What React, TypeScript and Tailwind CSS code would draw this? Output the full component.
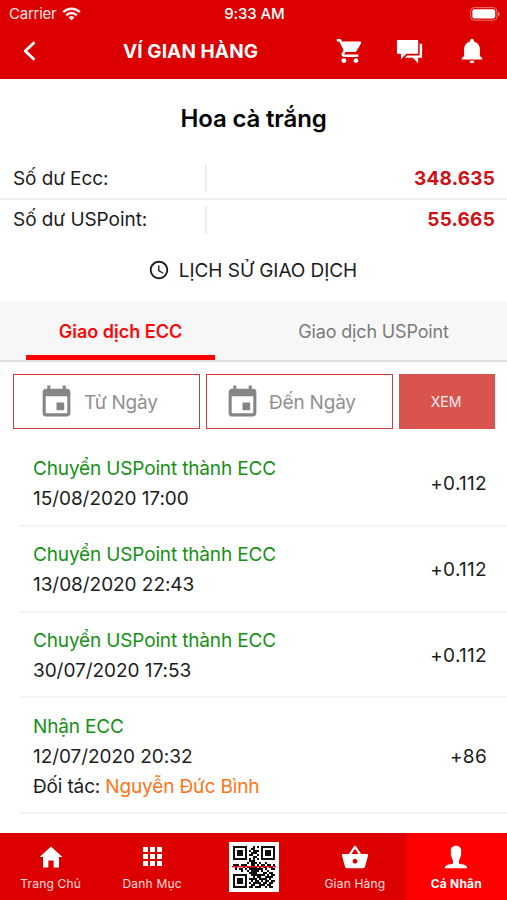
import type { ReactNode } from "react";
import {
  IoIosPerson,
  IoMdBasket,
  IoMdCart,
  IoMdChatboxes,
  IoMdHome,
  IoMdNotifications,
} from "react-icons/io";
import { MdAccessTime, MdEvent } from "react-icons/md";

const transactions = [
  { title: "Chuyển USPoint thành ECC", time: "15/08/2020 17:00", amount: "+0.112" },
  { title: "Chuyển USPoint thành ECC", time: "13/08/2020 22:43", amount: "+0.112" },
  { title: "Chuyển USPoint thành ECC", time: "30/07/2020 17:53", amount: "+0.112" },
  { title: "Nhận ECC", time: "12/07/2020 20:32", amount: "+86", partner: "Nguyễn Đức Bình" },
];

const qrRows = [
  "111111100010101111111",
  "100000100110001000001",
  "101110101011101011101",
  "101110100111001011101",
  "101110101100101011101",
  "100000100011001000001",
  "111111101010101111111",
  "000000001110000000000",
  "000000010111010010000",
  "111011100110101101101",
  "010001011111010110110",
  "010110101111111010011",
  "000010010111101001000",
  "000000001111000110110",
  "111111100111111101011",
  "100000100010110011110",
  "101110101111011110100",
  "101110100101101011011",
  "101110101011110110110",
  "100000100110011101100",
  "111111101101110010110",
];

function QrCode() {
  return (
    <svg width="50" height="50" viewBox="0 0 50 50">
      <rect width="50" height="50" fill="#fff" />
      {qrRows.map((row, y) =>
        row.split("").map((cell, x) =>
          cell === "1" ? (
            <rect key={`${x}-${y}`} x={4 + x * 2} y={4 + y * 2} width="2" height="2" fill="#111" />
          ) : null
        )
      )}
      <rect x="3" y="24" width="44" height="1.4" fill="#f01020" />
    </svg>
  );
}

function GridIcon() {
  return (
    <svg width="19" height="19" viewBox="0 0 19 19" fill="currentColor">
      {[0, 7, 14].map((y) =>
        [0, 7, 14].map((x) => <rect key={`${x}-${y}`} x={x} y={y} width="5" height="5" />)
      )}
    </svg>
  );
}

function StatusBar() {
  return (
    <div className="grid h-[27px] grid-cols-3 items-center pl-[9px] pr-[7px] pt-px text-[15px]">
      <div className="flex items-center gap-[6px] opacity-90">
        <span className="tracking-[-0.25px]">Carrier</span>
        <svg width="19" height="14" viewBox="0 0 19 14" fill="none" stroke="#fff" strokeWidth="2.5">
          <path d="M1.2 5.1a11.7 11.7 0 0 1 16.6 0" />
          <path d="M4.2 8.3a7.5 7.5 0 0 1 10.6 0" />
          <path d="M9.5 13.6 6.5 10.5a4.3 4.3 0 0 1 6 0z" fill="#fff" stroke="none" />
        </svg>
      </div>
      <span className="text-center text-[15px] font-medium tracking-[-0.1px]">9:33 AM</span>
      <svg className="justify-self-end" width="30" height="14" viewBox="0 0 30 14" fill="none">
        <rect x="0.6" y="0.6" width="26.4" height="12.6" rx="3.6" stroke="#fff" strokeOpacity="0.45" />
        <rect x="2.4" y="2.3" width="22.8" height="9.2" rx="2" fill="#fff" />
        <path d="M28.2 4.8v4.4c1.9-.8 1.9-3.6 0-4.4z" fill="#fff" fillOpacity="0.6" />
      </svg>
    </div>
  );
}

function NavItem({ icon, label, active }: { icon: ReactNode; label: string; active?: boolean }) {
  return (
    <div
      className={
        active
          ? "flex flex-1 flex-col items-center rounded-t-md bg-[#ff0000] font-bold text-white"
          : "flex flex-1 flex-col items-center text-white/85"
      }
    >
      <div className="flex h-[47px] items-center text-white">{icon}</div>
      <span className="text-[12px] leading-[8px] tracking-[0.2px]">{label}</span>
    </div>
  );
}

export default function App() {
  return (
    <div className="flex h-[900px] w-[507px] flex-col overflow-hidden bg-white font-['Inter','Noto_Sans',sans-serif] text-[19px] text-[#1c1c1c]">
      {/* Header */}
      <header className="h-[79px] shrink-0 bg-[#dd0000] text-white">
        <StatusBar />
        <div className="flex h-[48px] items-center pl-[23px] pr-[20px]">
          <svg width="13" height="20" viewBox="0 0 13 20" fill="none" stroke="currentColor" strokeWidth="2.8">
            <path d="M11.5 1.2 2.2 10l9.3 8.8" strokeLinejoin="round" />
          </svg>
          <h1 className="ml-[87px] whitespace-nowrap pt-[2px] text-[19px] font-bold tracking-[0.1px]">VÍ GIAN HÀNG</h1>
          <div className="ml-auto flex items-center">
            <IoMdCart size={30} />
            <IoMdChatboxes size={31} className="ml-[30px]" />
            <IoMdNotifications size={30} className="ml-[32px]" />
          </div>
        </div>
      </header>

      {/* Balance */}
      <h2 className="mt-[22px] text-center text-[24px] font-semibold leading-[36px] tracking-[-0.15px] text-black">
        Hoa cà trắng
      </h2>
      <div className="mt-[21px]">
        <div className="flex h-[42px] items-center border-b-2 border-[#eeeeee] px-[13px]">
          <span className="w-[192px] pt-[2px] tracking-[-0.1px]">Số dư Ecc:</span>
          <span className="h-[28px] w-[2px] bg-[#eeeeee]" />
          <span className="-mr-px ml-auto pt-[2px] font-bold tracking-[0.2px] text-[#cf1015]">348.635</span>
        </div>
        <div className="flex h-[40px] items-center px-[13px]">
          <span className="w-[192px] pt-px tracking-[-0.05px]">Số dư USPoint:</span>
          <span className="h-[28px] w-[2px] bg-[#eeeeee]" />
          <span className="-mr-px ml-auto pt-px font-bold tracking-[0.2px] text-[#cf1015]">55.665</span>
        </div>
      </div>
      <div className="mt-[15px] flex h-[30px] items-center justify-center gap-[9px] pr-[2px]">
        <MdAccessTime size={22} />
        <span className="pt-[2px] tracking-[-0.05px]">LỊCH SỬ GIAO DỊCH</span>
      </div>

      {/* Tabs */}
      <div className="mt-[16px] flex h-[61px] shrink-0 border-b-2 border-[#dddddd] bg-[#f7f7f7] text-[18px]">
        <div className="ml-[26px] flex w-[189px] flex-col items-center border-b-[5px] border-[#ff0000] pt-[17px] font-semibold text-[#f90808]">
          Giao dịch ECC
        </div>
        <div className="ml-[64px] w-[189px] pt-[17px] text-center tracking-[-0.15px] text-[#7b7b7b]">Giao dịch USPoint</div>
      </div>

      {/* Filter */}
      <div className="mt-[12px] flex h-[55px] shrink-0 gap-[6px] pl-[13px] text-[#909090]">
        <div className="flex w-[187px] items-center border-[1.5px] border-[#d23b3b] pl-[24px]">
          <MdEvent size={37} className="mt-[2px] text-[#858585]" />
          <span className="ml-[9px] pt-[3px] tracking-[-0.2px]">Từ Ngày</span>
        </div>
        <div className="flex w-[187px] items-center border-[1.5px] border-[#d23b3b] pl-[17px]">
          <MdEvent size={37} className="mt-[2px] text-[#858585]" />
          <span className="ml-[8px] pt-[3px] tracking-[-0.2px]">Đến Ngày</span>
        </div>
        <button className="w-[96px] bg-[#d9534f] pr-[2px] text-[14px] text-white/90">XEM</button>
      </div>

      {/* Transactions */}
      <div className="mt-[12px] flex-1 pl-[20px]">
        {transactions.map((item) => (
          <div
            key={item.time}
            className="flex items-center justify-between border-b-2 border-[#f3f3f3] pb-[10.4px] pl-[13px] pr-[20px] pt-[13.4px] leading-[30px]"
          >
            <div>
              <p className="tracking-[-0.15px] text-[#159015]">{item.title}</p>
              <p className="tracking-[-0.05px]">{item.time}</p>
              {item.partner && (
                <p className="tracking-[-0.15px]">
                  Đối tác: <span className="text-[#ff7417]">{item.partner}</span>
                </p>
              )}
            </div>
            <span className="tracking-[0.3px]">{item.amount}</span>
          </div>
        ))}
      </div>

      {/* Bottom navigation */}
      <nav className="flex h-[67px] shrink-0 bg-[#dd0000]">
        <NavItem icon={<IoMdHome size={28} />} label="Trang Chủ" />
        <NavItem icon={<GridIcon />} label="Danh Mục" />
        <div className="flex flex-1 items-center justify-center">
          <QrCode />
        </div>
        <NavItem icon={<IoMdBasket size={30} />} label="Gian Hàng" />
        <NavItem icon={<IoIosPerson size={30} />} label="Cá Nhân" active />
      </nav>
    </div>
  );
}
